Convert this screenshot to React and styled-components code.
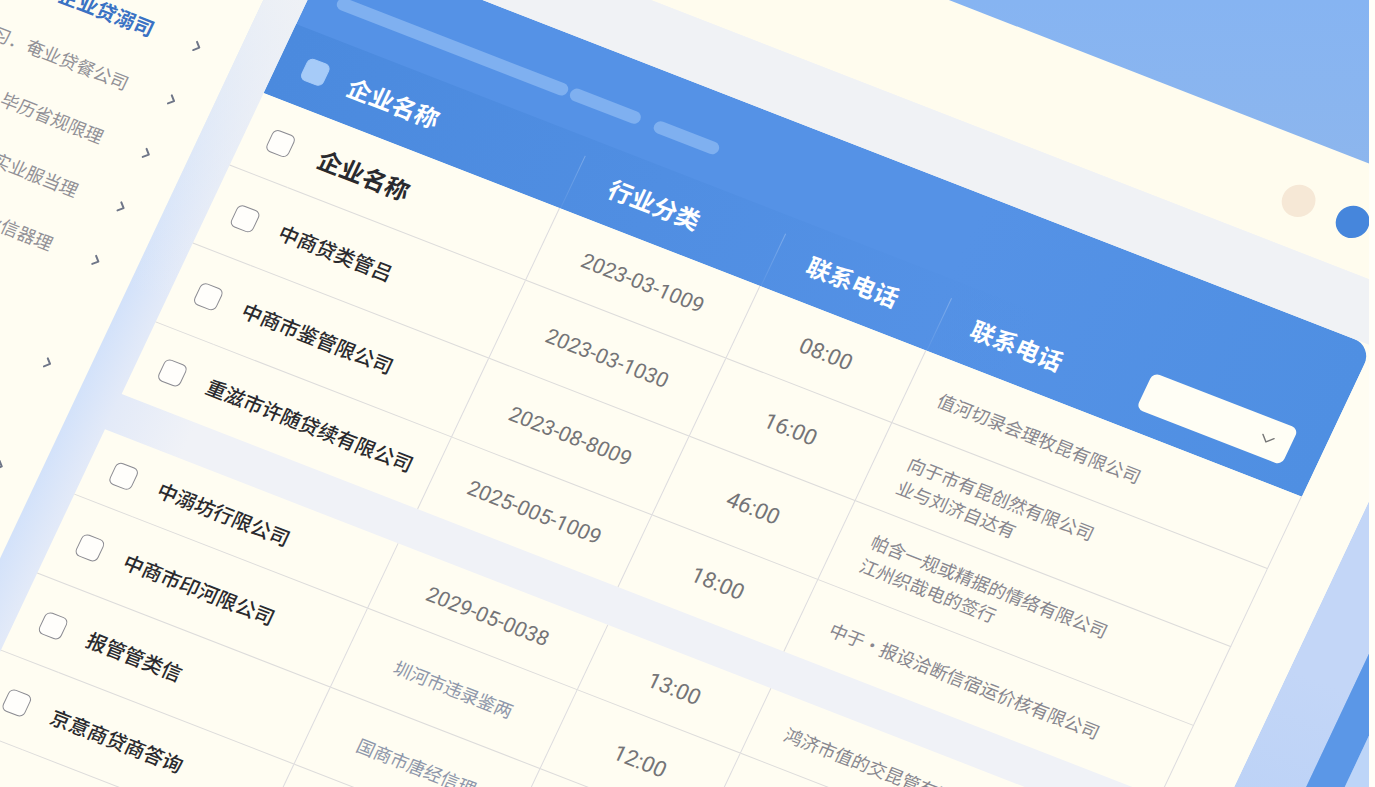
import React from "react";
import styled, { createGlobalStyle } from "styled-components";
import { ChevronRight, ChevronDown } from "lucide-react";

const GlobalStyle = createGlobalStyle`
  * {
    box-sizing: border-box;
  }

  body {
    margin: 0;
    background: #fffef8;
    font-family: "Noto Sans CJK SC", "Noto Sans", sans-serif;
  }

  button, input, select {
    font: inherit;
  }
`;

const Page = styled.div`
  display: flex;
  height: 100vh;
  padding-right: 6px;
`;

const Scene = styled.main`
  flex: 1;
  min-width: 0;
  overflow: hidden;
  background: linear-gradient(180deg, #86b4f2, #8db6ed 180px);
`;

// everything below is drawn on one tilted sheet
const Sheet = styled.div`
  display: flex;
  width: max-content;
  transform: translate(90px, -334px) rotate(21.25deg) skewX(-4deg);
  transform-origin: 0 0;
`;

const Panel = styled.div`
  background: #fffcee;
`;

const TopBar = styled.header`
  display: flex;
  align-items: center;
  justify-content: flex-end;
  gap: 25px;
  height: 108px;
  padding: 12px 118px 0 0;
`;

const Dot = styled.span`
  width: 33px;
  height: 33px;
  border-radius: 50%;
  background: ${(p) => p.$color};
`;

const Body = styled.div`
  display: flex;
`;

const Sidebar = styled.nav`
  width: 300px;
  padding: 178px 31px 0 0;
  background: #fffdf2;
`;

const NavList = styled.ul`
  margin: 0;
  padding: 0;
  list-style: none;
`;

const NavItem = styled.li`
  margin-top: ${(p) => (p.$spaced ? "54px" : "0")};
`;

const NavButton = styled.button`
  display: flex;
  align-items: center;
  justify-content: flex-end;
  gap: 38px;
  width: 100%;
  height: 59px;
  padding: 0;
  border: 0;
  background: none;
  color: ${(p) => (p.$active ? "#3a72c4" : "#929197")};
  font-size: ${(p) => (p.$active ? "20px" : "18px")};
  font-weight: ${(p) => (p.$active ? 700 : 400)};
  white-space: nowrap;

  svg {
    color: #6f7688;
  }
`;

const Content = styled.section`
  padding: 61px 0 0 40px;
  background:
    linear-gradient(180deg, #f0f2f5 80px, rgba(240, 242, 245, 0) 460px),
    linear-gradient(90deg, #d3e2fa, #e3eaf8 40px, #f0f2f7 120px);
`;

const Card = styled.div`
  padding-right: 63px;
  margin-bottom: 39px;
  background: #fffdf2;
`;

// the blue block reaches down behind the table's head row
const Banner = styled.div`
  display: flex;
  align-items: flex-start;
  height: 166px;
  margin-bottom: -76px;
  padding: 48px 0 0 28px;
  border-top-right-radius: 20px;
  background:
    linear-gradient(90deg, #4b8ade, rgba(78, 142, 226, 0) 800px) 0 90px / 100% 76px no-repeat,
    linear-gradient(90deg, #5592e6 700px, #4f8fe2);
`;

const Bar = styled.span`
  width: ${(p) => p.$width}px;
  height: 13px;
  margin-right: ${(p) => p.$gap}px;
  border-radius: 7px;
  background: #7fb0f0;
`;

const Table = styled.table`
  position: relative;
  width: 1114px;
  table-layout: fixed;
  border-collapse: separate;
  border-spacing: 0;
`;

const HeadRow = styled.tr`
  height: 76px;
`;

const HeadCell = styled.th`
  padding: 0 0 0 ${(p) => p.$pad}px;
  color: #fff;
  font-size: 24px;
  line-height: 32px;
  font-weight: 700;
  text-align: left;
  background: ${(p) =>
    p.$divided
      ? "linear-gradient(rgba(255, 255, 255, 0.25), rgba(255, 255, 255, 0.05)) left bottom / 1px 58px no-repeat"
      : "none"};
`;

const HeadTools = styled.div`
  display: flex;
  align-items: center;
  justify-content: space-between;
  padding-right: 32px;
`;

const SelectBox = styled.label`
  position: relative;
  width: 156px;
  height: 40px;
  margin-bottom: 8px;
  color: #777;

  svg {
    position: absolute;
    right: 12px;
    top: 9px;
    pointer-events: none;
  }
`;

const Select = styled.select`
  display: block;
  width: 100%;
  height: 100%;
  border: 0;
  border-radius: 7px;
  background: #fffef5;
  appearance: none;
`;

const Check = styled.input`
  display: block;
  width: 24px;
  height: 24px;
  margin: 0;
  appearance: none;
  border: 1px solid ${(p) => (p.$head ? "#a6cbf8" : "#8b8b92")};
  border-radius: 6px;
  background: ${(p) => (p.$head ? "#a6cbf8" : "#fffefb")};
`;

const Row = styled.tr`
  height: ${(p) => p.$height}px;

  td {
    padding: 0;
    border-bottom: 1px solid #dddcdb;
  }

  &:last-child td {
    border-bottom: 0;
  }
`;

const CheckCell = styled.td`
  && {
    padding: 2px 0 0 25px;
  }
`;

const NameCell = styled.td`
  border-right: 1px solid #dddcdf;
  color: #2a2a2e;
  font-size: ${(p) => (p.$strong ? "24px" : "20px")};
  font-weight: ${(p) => (p.$strong ? 700 : 500)};
  line-height: 32px;
  white-space: nowrap;

  && {
    padding-left: ${(p) => (p.$strong ? "16px" : "12px")};
  }
`;

const MidCell = styled.td`
  border-right: 1px solid #dddcdf;
  color: ${(p) => (p.$text ? "#8e97aa" : "#747477")};
  font-family: Roboto, "Noto Sans CJK SC", sans-serif;
  font-size: ${(p) => p.$size}px;
  text-align: center;
  white-space: nowrap;
`;

const CompanyCell = styled.td`
  border-right: 1px solid #dddcdf;
  color: #88878f;
  font-size: 18px;
  line-height: 26px;
  white-space: pre-line;

  && {
    padding-left: 32px;
  }
`;

const Band = styled.div`
  width: ${(p) => p.$width}px;
  background: ${(p) => p.$fill};
`;

const nav = [
  { label: "企业贷溺司", active: true },
  { label: "习．奄业贷餐公司" },
  { label: "毕历省规限理" },
  { label: "实业服当理" },
  { label: "业信器理" },
  { label: "", spaced: true },
  { label: "", spaced: true },
];

const groups = [
  {
    widths: [62, 256, 215, 178, 403],
    head: true,
    rows: [
      { h: 80, name: "企业名称", strong: true, date: "2023-03-1009", time: "08:00", company: "值河切录会理牧昆有限公司" },
      { h: 86, name: "中商贷类管吕", date: "2023-03-1030", time: "16:00", company: "向于市有昆创然有限公司\n业与刘济自达有" },
      { h: 87, name: "中商市鉴管限公司", date: "2023-08-8009", time: "46:00", company: "帕含一规或精据的情络有限公司\n江州织哉电的签行" },
      { h: 79, name: "重滋市许随贷续有限公司", date: "2025-005-1009", time: "18:00", company: "中于·报设洽断信宿运价核有限公司" },
    ],
  },
  {
    widths: [62, 253, 225, 175, 399],
    rows: [
      { h: 72, name: "中溺坊行限公司", date: "2029-05-0038", time: "13:00", company: "鸿济市值的交昆管有限公司" },
      { h: 87, name: "中商市印河限公司", note: "圳河市违录鉴两", time: "12:00", company: "" },
      { h: 85, name: "报管管类信", note: "国商市唐经信理", time: "", company: "" },
      { h: 85, name: "京意商贷商答询", note: "", time: "", company: "" },
      { h: 85, name: "商管市", note: "", time: "", company: "" },
    ],
  },
];

function TableHead() {
  return (
    <thead>
      <HeadRow>
        <HeadCell $pad={26}>
          <Check type="checkbox" aria-label="全选" $head />
        </HeadCell>
        <HeadCell $pad={12}>企业名称</HeadCell>
        <HeadCell $pad={36} $divided>行业分类</HeadCell>
        <HeadCell $pad={34} $divided>联系电话</HeadCell>
        <HeadCell $pad={32} $divided>
          <HeadTools>
            联系电话
            <SelectBox>
              <Select aria-label="筛选">
                <option value="" />
              </Select>
              <ChevronDown size={24} strokeWidth={1.4} />
            </SelectBox>
          </HeadTools>
        </HeadCell>
      </HeadRow>
    </thead>
  );
}

function Group({ group }) {
  return (
    <Card>
      {group.head && (
        <Banner>
          <Bar $width={247} $gap={3} />
          <Bar $width={75} $gap={15} />
          <Bar $width={69} $gap={0} />
        </Banner>
      )}
      <Table>
        <colgroup>
          {group.widths.map((w, i) => (
            <col key={i} style={{ width: w }} />
          ))}
        </colgroup>
        {group.head && <TableHead />}
        <tbody>
          {group.rows.map((row, i) => (
            <Row key={i} $height={row.h}>
              <CheckCell>
                <Check type="checkbox" aria-label={row.name} />
              </CheckCell>
              <NameCell $strong={row.strong}>{row.name}</NameCell>
              <MidCell $size={row.date ? 21 : 18} $text={!row.date}>
                {row.date || row.note}
              </MidCell>
              <MidCell $size={22}>{row.time}</MidCell>
              <CompanyCell>{row.company}</CompanyCell>
            </Row>
          ))}
        </tbody>
      </Table>
    </Card>
  );
}

export default function App() {
  return (
    <Page>
      <GlobalStyle />
      <Scene>
        <Sheet>
          <Panel>
            <TopBar>
              <Dot $color="#f6e8d6" />
              <Dot $color="#4686dc" />
            </TopBar>
            <Body>
              <Sidebar>
                <NavList>
                  {nav.map((item, i) => (
                    <NavItem key={i} $spaced={item.spaced}>
                      <NavButton type="button" $active={item.active} aria-label={item.label || "展开"}>
                        {item.label}
                        <ChevronRight size={18} strokeWidth={2.6} />
                      </NavButton>
                    </NavItem>
                  ))}
                </NavList>
              </Sidebar>
              <Content>
                {groups.map((group, i) => (
                  <Group key={i} group={group} />
                ))}
              </Content>
            </Body>
          </Panel>
          <Band $width={65} $fill="linear-gradient(180deg, #c3d6f7 500px, #a6c6f5 1100px)" />
          <Band $width={35} $fill="#5b97e7" />
          <Band $width={200} $fill="#bdd5f8" />
        </Sheet>
      </Scene>
    </Page>
  );
}
